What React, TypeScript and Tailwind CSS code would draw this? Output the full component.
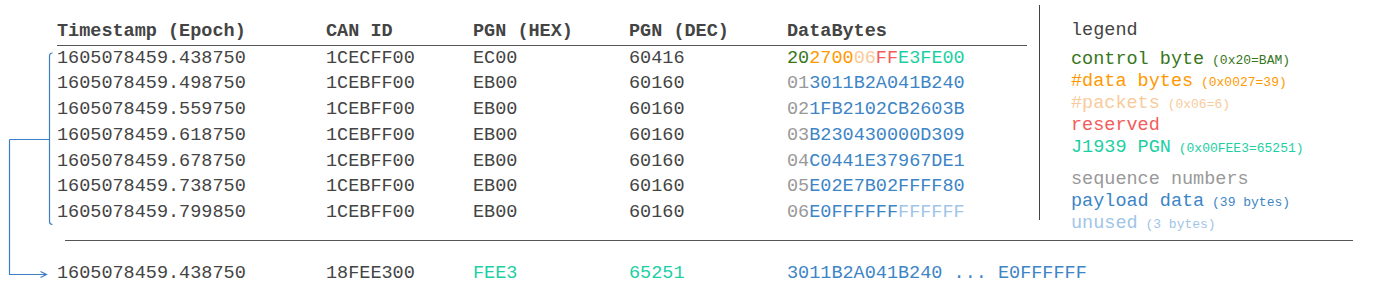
import React from "react";

const mono = "font-['Liberation_Mono','DejaVu_Sans_Mono',monospace]";

type Seg = { t: string; c: string };

const rows: { ts: string; id: string; hex: string; dec: string; data: Seg[] }[] = [
  {
    ts: "1605078459.438750",
    id: "1CECFF00",
    hex: "EC00",
    dec: "60416",
    data: [
      { t: "20", c: "text-[#38761d]" },
      { t: "2700", c: "text-[#ff9900]" },
      { t: "06", c: "text-[#f9cb9c]" },
      { t: "FF", c: "text-[#f45b5b]" },
      { t: "E3FE00", c: "text-[#1ccfa4]" },
    ],
  },
  { ts: "1605078459.498750", id: "1CEBFF00", hex: "EB00", dec: "60160", data: [{ t: "01", c: "text-[#999999]" }, { t: "3011B2A041B240", c: "text-[#3d85c6]" }] },
  { ts: "1605078459.559750", id: "1CEBFF00", hex: "EB00", dec: "60160", data: [{ t: "02", c: "text-[#999999]" }, { t: "1FB2102CB2603B", c: "text-[#3d85c6]" }] },
  { ts: "1605078459.618750", id: "1CEBFF00", hex: "EB00", dec: "60160", data: [{ t: "03", c: "text-[#999999]" }, { t: "B230430000D309", c: "text-[#3d85c6]" }] },
  { ts: "1605078459.678750", id: "1CEBFF00", hex: "EB00", dec: "60160", data: [{ t: "04", c: "text-[#999999]" }, { t: "C0441E37967DE1", c: "text-[#3d85c6]" }] },
  { ts: "1605078459.738750", id: "1CEBFF00", hex: "EB00", dec: "60160", data: [{ t: "05", c: "text-[#999999]" }, { t: "E02E7B02FFFF80", c: "text-[#3d85c6]" }] },
  {
    ts: "1605078459.799850",
    id: "1CEBFF00",
    hex: "EB00",
    dec: "60160",
    data: [
      { t: "06", c: "text-[#999999]" },
      { t: "E0FFFFFF", c: "text-[#3d85c6]" },
      { t: "FFFFFF", c: "text-[#9fc5e8]" },
    ],
  },
];

const legend: { main: string; note?: string; c: string; gap?: boolean }[] = [
  { main: "control byte", note: "(0x20=BAM)", c: "text-[#38761d]" },
  { main: "#data bytes", note: "(0x0027=39)", c: "text-[#ff9900]" },
  { main: "#packets", note: "(0x06=6)", c: "text-[#f9cb9c]" },
  { main: "reserved", c: "text-[#f45b5b]" },
  { main: "J1939 PGN", note: "(0x00FEE3=65251)", c: "text-[#1ccfa4]" },
  { main: "sequence numbers", c: "text-[#999999]", gap: true },
  { main: "payload data", note: "(39 bytes)", c: "text-[#3d85c6]" },
  { main: "unused", note: "(3 bytes)", c: "text-[#9fc5e8]" },
];

function Cols({ cells, className }: { cells: React.ReactNode[]; className?: string }) {
  return (
    <div className={`flex leading-[25.7px] ${className ?? ""}`}>
      <div className="w-[269px] shrink-0">{cells[0]}</div>
      <div className="w-[147px] shrink-0">{cells[1]}</div>
      <div className="w-[156px] shrink-0">{cells[2]}</div>
      <div className="w-[158px] shrink-0">{cells[3]}</div>
      <div className="flex-1 whitespace-pre">{cells[4]}</div>
    </div>
  );
}

function Bracket() {
  return (
    <svg className="absolute left-0 top-0 pointer-events-none" width="60" height="300" fill="none">
      <g stroke="#3d7fc4" strokeWidth="1.2">
        <path d="M52.5 53 Q49.5 53 49.5 56 V221.5 Q49.5 224.5 52.5 224.5" />
        <path d="M9.5 139.5 H49.5" />
        <path d="M9.5 139.5 V274.5 H46" />
        <path d="M40.5 271.5 L46.5 274.5 L40.5 277.5" />
      </g>
    </svg>
  );
}

export default function App() {
  return (
    <div className={`relative w-[1400px] h-[300px] bg-white text-[#444] text-[18.5px] ${mono}`}>
      <Bracket />
      <div className="flex items-start">
        <div className="ml-[57px] w-[970px] pt-[19px]">
          <Cols
            className="font-bold border-b border-[#555]"
            cells={["Timestamp (Epoch)", "CAN ID", "PGN (HEX)", "PGN (DEC)", "DataBytes"]}
          />
          {rows.map((r, i) => (
            <Cols
              key={i}
              cells={[
                r.ts,
                r.id,
                r.hex,
                r.dec,
                r.data.map((s, j) => (
                  <span key={j} className={s.c}>
                    {s.t}
                  </span>
                )),
              ]}
            />
          ))}
        </div>
        <div className="ml-[12px] mt-[5px] h-[215px] border-l border-[#444] pl-[31px] pt-[13px]">
          <div className="leading-[25.7px] mb-[5px]">legend</div>
          {legend.map((l, i) => (
            <div key={i} className={`leading-[22px] whitespace-pre ${l.c} ${l.gap ? "mt-[10px]" : ""}`}>
              {l.main}
              {l.note && <span className="text-[13px] leading-none"> {l.note}</span>}
            </div>
          ))}
        </div>
      </div>
      <div className="ml-[65px] mt-[14px] w-[1288px] border-t border-[#555]" />
      <div className="ml-[57px] mt-[20px] w-[970px]">
        <Cols
          cells={[
            "1605078459.438750",
            "18FEE300",
            <span className="text-[#1ccfa4]">FEE3</span>,
            <span className="text-[#1ccfa4]">65251</span>,
            <span className="text-[#3d85c6]">3011B2A041B240 ... E0FFFFFF</span>,
          ]}
        />
      </div>
    </div>
  );
}
